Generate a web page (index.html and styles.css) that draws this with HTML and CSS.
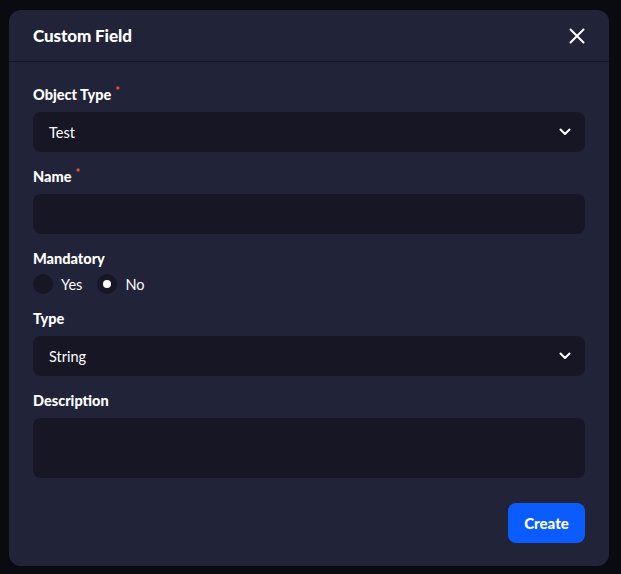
FILE: index.html
```html
<!DOCTYPE html>
<html>
<head>
<meta charset="utf-8">
<link rel="stylesheet" href="styles.css">
</head>
<body>
<div class="modal">
  <div class="modal-header">
    <h2 class="title">Custom Field</h2>
    <button class="close" aria-label="Close">
      <svg width="16" height="16" viewBox="0 0 16 16"><path d="M1.5 1.5 L14.5 14.5 M14.5 1.5 L1.5 14.5" stroke="#fff" stroke-width="2" stroke-linecap="round"/></svg>
    </button>
  </div>
  <div class="modal-body">
    <div class="field">
      <label class="label">Object Type<span class="req">*</span></label>
      <div class="select">
        <span>Test</span>
        <svg class="chev" width="12" height="8" viewBox="0 0 12 8"><path d="M1.5 1.5 L6 6 L10.5 1.5" fill="none" stroke="#fff" stroke-width="2" stroke-linecap="round" stroke-linejoin="round"/></svg>
      </div>
    </div>
    <div class="field">
      <label class="label">Name<span class="req">*</span></label>
      <div class="input"></div>
    </div>
    <div class="field">
      <label class="label">Mandatory</label>
      <div class="radios">
        <span class="radio-item"><span class="radio"></span>Yes</span>
        <span class="radio-item"><span class="radio checked"></span>No</span>
      </div>
    </div>
    <div class="field">
      <label class="label">Type</label>
      <div class="select">
        <span>String</span>
        <svg class="chev" width="12" height="8" viewBox="0 0 12 8"><path d="M1.5 1.5 L6 6 L10.5 1.5" fill="none" stroke="#fff" stroke-width="2" stroke-linecap="round" stroke-linejoin="round"/></svg>
      </div>
    </div>
    <div class="field">
      <label class="label">Description</label>
      <div class="textarea"></div>
    </div>
    <div class="actions">
      <button class="btn-primary">Create</button>
    </div>
  </div>
</div>
</body>
</html>
```
FILE: styles.css
```css
html, body {
  margin: 0;
  padding: 0;
  background: #0a0b10;
  width: 621px;
  height: 574px;
  overflow: hidden;
}
body {
  font-family: "Lato", "Inter", sans-serif;
  color: #fff;
  padding: 10px 12px 8px 9px;
  box-sizing: border-box;
}
.modal {
  width: 600px;
  height: 556px;
  background: #212339;
  border-radius: 12px;
  display: flex;
  flex-direction: column;
}
.modal-header {
  height: 52px;
  box-sizing: border-box;
  border-bottom: 1px solid #16172a;
  display: flex;
  align-items: center;
  justify-content: space-between;
  padding: 0 24px;
}
.title {
  margin: 0;
  font-size: 17px;
  font-weight: 900;
  letter-spacing: -0.1px;
}
.close {
  background: none;
  border: 0;
  padding: 0;
  width: 16px;
  height: 16px;
  display: flex;
  cursor: pointer;
}
.modal-body {
  padding: 23px 24px 0;
  display: flex;
  flex-direction: column;
}
.field {
  display: flex;
  flex-direction: column;
  margin-bottom: 15px;
}
.label {
  font-size: 14.5px;
  font-weight: 900;
  line-height: 20px;
  margin-bottom: 7px;
}
.req {
  color: #ff4d4f;
  font-size: 11px;
  vertical-align: top;
  line-height: 12px;
  margin-left: 4px;
}
.select, .input {
  height: 40px;
  background: #171625;
  border-radius: 8px;
  display: flex;
  align-items: center;
  justify-content: space-between;
  padding: 0 14px 0 16px;
  font-size: 14.5px;
}
.chev { display: block; }
.textarea {
  height: 60px;
  background: #171625;
  border-radius: 8px;
}
.radios {
  display: flex;
  align-items: center;
  gap: 15px;
  height: 20px;
  margin-top: -2px;
  margin-bottom: 0;
  font-size: 14.5px;
}
.radio-item {
  display: flex;
  align-items: center;
  gap: 8px;
}
.radio {
  width: 20px;
  height: 20px;
  border-radius: 50%;
  background: #171625;
  display: flex;
  align-items: center;
  justify-content: center;
}
.radio.checked::after {
  content: "";
  width: 8px;
  height: 8px;
  border-radius: 50%;
  background: #fff;
}
.actions {
  display: flex;
  justify-content: flex-end;
  margin-top: 10px;
}
.btn-primary {
  width: 77px;
  height: 40px;
  background: #0a5cff;
  color: #fff;
  border: 0;
  border-radius: 8px;
  font-family: "Lato", "Inter", sans-serif;
  font-weight: 900;
  font-size: 15px;
}
```
